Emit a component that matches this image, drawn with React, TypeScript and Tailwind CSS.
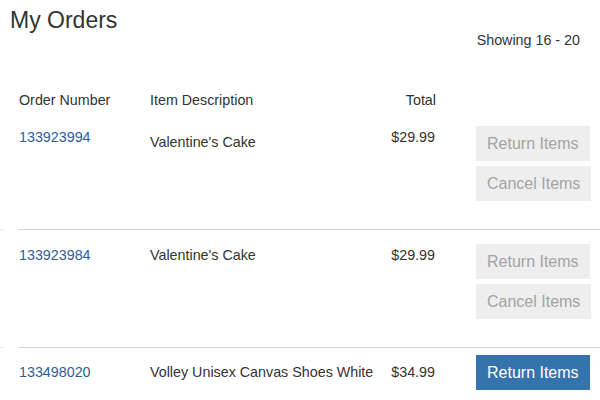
const orders = [
  {
    id: "133923994",
    desc: "Valentine's Cake",
    total: "$29.99",
    active: false,
    pad: { row: "pt-[16px] pb-[28px]", num: "pt-[1px]", desc: "pt-[6px]" },
  },
  {
    id: "133923984",
    desc: "Valentine's Cake",
    total: "$29.99",
    active: false,
    pad: { row: "pt-[14px] pb-[28px]", num: "pt-[1px]", desc: "pt-[1px]" },
  },
  {
    id: "133498020",
    desc: "Volley Unisex Canvas Shoes White",
    total: "$34.99",
    active: true,
    pad: { row: "pt-[7px] pb-[10px]", num: "pt-[7px]", desc: "pt-[7px]" },
  },
];

function Divider() {
  return (
    <div className="flex h-px">
      <div className="w-[4px] bg-[#ececec]" />
      <div className="ml-[15px] flex-1 bg-[#d3d3d3]" />
    </div>
  );
}

export default function App() {
  return (
    <div
      className="h-[400px] w-[600px] overflow-hidden bg-white text-[#333]"
      style={{ fontFamily: '"Liberation Sans", Arial, sans-serif' }}
    >
      {/* Heading */}
      <div className="flex items-start">
        <h1 className="pl-[10px] pt-[8px] text-[23px] leading-[1.1]">My Orders</h1>
        <div className="ml-auto mr-[20px] pt-[30px] text-[14.3px] leading-[20px]">Showing 16 - 20</div>
      </div>

      {/* Column headers */}
      <div className="ml-[19px] mt-[40px] flex text-[14.3px] leading-[20px]">
        <div className="w-[131px]">Order Number</div>
        <div className="w-[230px]">Item Description</div>
        <div className="w-[56px] text-right">Total</div>
      </div>

      {orders.map((o, i) => (
        <div key={o.id}>
          {i > 0 && <Divider />}
          <div className={`ml-[19px] flex items-start text-[14.3px] leading-[20px] ${o.pad.row}`}>
            <a className={`w-[131px] text-[#2c5d98] ${o.pad.num}`} href="#">
              {o.id}
            </a>
            <div className={`w-[230px] ${o.pad.desc}`}>{o.desc}</div>
            <div className={`w-[55px] text-right ${o.pad.num}`}>{o.total}</div>
            <div className="ml-[41px] flex flex-col items-start gap-[5px] text-[16px] leading-[20px]">
              {o.active ? (
                <button className="h-[35px] bg-[#3573ac] px-[11px] text-white">Return Items</button>
              ) : (
                <>
                  <button className="h-[35px] bg-[#eeeeee] px-[11px] text-[#a3a3a3]">Return Items</button>
                  <button className="h-[35px] bg-[#eeeeee] px-[11px] text-[#a3a3a3]">Cancel Items</button>
                </>
              )}
            </div>
          </div>
        </div>
      ))}
    </div>
  );
}
